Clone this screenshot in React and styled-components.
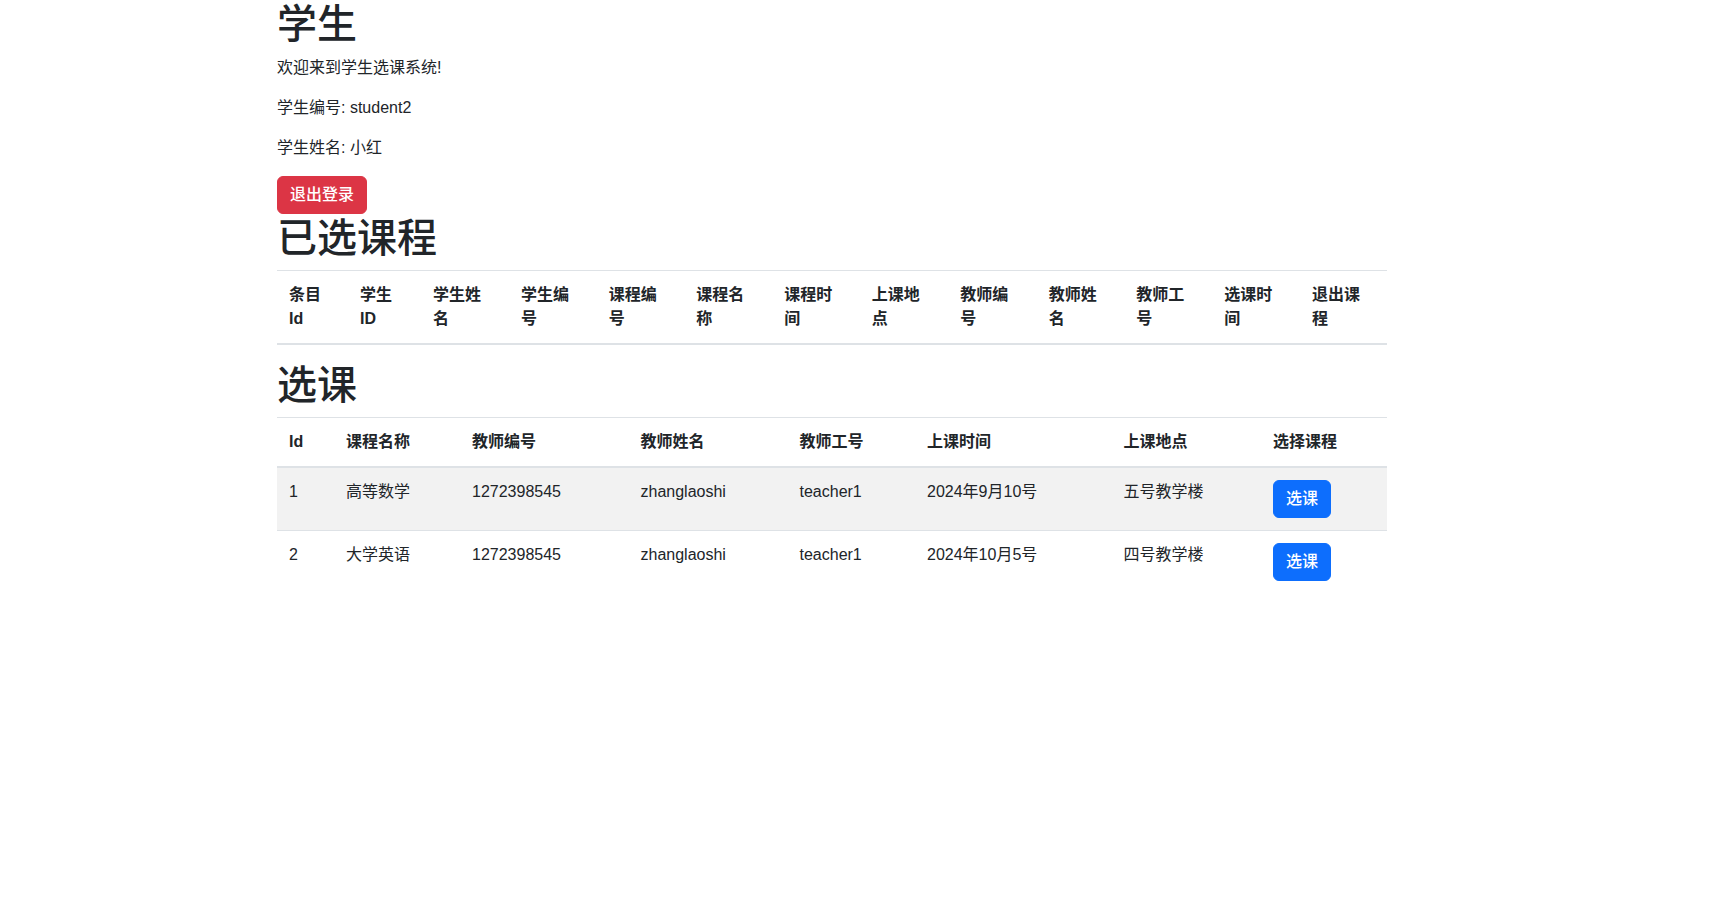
import styled, { createGlobalStyle } from 'styled-components';

const GlobalStyle = createGlobalStyle`
    body {
        margin: 0;
        font-family: 'Liberation Sans', 'Noto Sans CJK SC', sans-serif;
        font-size: 16px;
        line-height: 1.5;
        color: #212529;
        background: #fff;
    }
`;

// header of the selected-course table, each split in the two lines it wraps into
const selected = {
    cols: [71, 73, 88, 87.5, 87.5, 88, 87.5, 88.5, 88.5, 87.5, 88, 87.5, 87],
    heads: [
        ['条目', 'Id'],
        ['学生', 'ID'],
        ['学生姓', '名'],
        ['学生编', '号'],
        ['课程编', '号'],
        ['课程名', '称'],
        ['课程时', '间'],
        ['上课地', '点'],
        ['教师编', '号'],
        ['教师姓', '名'],
        ['教师工', '号'],
        ['选课时', '间'],
        ['退出课', '程'],
    ],
};

const courses = [
    { id: 1, name: '高等数学', teacherNo: '1272398545', teacher: 'zhanglaoshi', work: 'teacher1', time: '2024年9月10号', place: '五号教学楼' },
    { id: 2, name: '大学英语', teacherNo: '1272398545', teacher: 'zhanglaoshi', work: 'teacher1', time: '2024年10月5号', place: '四号教学楼' },
];

const courseCols = [57, 126, 168.5, 159, 127.5, 196.5, 149.5, 126];
const courseHeads = ['Id', '课程名称', '教师编号', '教师姓名', '教师工号', '上课时间', '上课地点', '选择课程'];

const App = () => {
    return (
        <Page>
            <GlobalStyle />
            <Title>学生</Title>
            <Text>欢迎来到学生选课系统!</Text>
            <Text>学生编号: student2</Text>
            <Text>学生姓名: 小红</Text>
            <Button $variant='danger'>退出登录</Button>

            <Title>已选课程</Title>
            <Table>
                <colgroup>
                    {selected.cols.map((w, i) => (
                        <Col key={i} $w={w} />
                    ))}
                </colgroup>
                <thead>
                    <tr>
                        {selected.heads.map(([a, b]) => (
                            <Th key={a + b}>
                                {a}
                                <br />
                                {b}
                            </Th>
                        ))}
                    </tr>
                </thead>
                <tbody></tbody>
            </Table>

            <Title>选课</Title>
            <Table>
                <colgroup>
                    {courseCols.map((w, i) => (
                        <Col key={i} $w={w} />
                    ))}
                </colgroup>
                <thead>
                    <tr>
                        {courseHeads.map((h) => (
                            <Th key={h}>{h}</Th>
                        ))}
                    </tr>
                </thead>
                <tbody>
                    {courses.map((c) => (
                        <Row key={c.id}>
                            <Td>{c.id}</Td>
                            <Td>{c.name}</Td>
                            <Td>{c.teacherNo}</Td>
                            <Td>{c.teacher}</Td>
                            <Td>{c.work}</Td>
                            <Td>{c.time}</Td>
                            <Td>{c.place}</Td>
                            <Td>
                                <Button $variant='primary'>选课</Button>
                            </Td>
                        </Row>
                    ))}
                </tbody>
            </Table>
        </Page>
    );
};

export default App;

const Page = styled.div`
    width: 1110px;
    padding-left: 277px;
`;

const Title = styled.h1`
    margin: 0 0 8px;
    font-size: 40px;
    font-weight: 500;
    line-height: 1.2;
`;

const Text = styled.p`
    margin: 0 0 16px;
`;

const Button = styled.button`
    display: inline-block;
    padding: 6px 12px;
    font-family: inherit;
    font-size: 16px;
    font-weight: 500;
    line-height: 1.5;
    color: #fff;
    border: 1px solid ${(p) => (p.$variant === 'danger' ? '#dc3545' : '#0d6efd')};
    background-color: ${(p) => (p.$variant === 'danger' ? '#dc3545' : '#0d6efd')};
    border-radius: 6px;
    cursor: pointer;
`;

const Table = styled.table`
    width: 100%;
    margin-bottom: 16px;
    border-collapse: collapse;
    table-layout: fixed;
    color: #212529;
`;

const Col = styled.col`
    width: ${(p) => p.$w}px;
`;

const Th = styled.th`
    padding: 12px;
    text-align: left;
    vertical-align: bottom;
    font-weight: 700;
    border-top: 1px solid #dee2e6;
    border-bottom: 2px solid #dee2e6;
`;

const Row = styled.tr`
    &:nth-of-type(odd) {
        background-color: rgba(0, 0, 0, 0.05);
    }
`;

const Td = styled.td`
    padding: 12px;
    vertical-align: top;
    border-top: 1px solid #dee2e6;
`;
